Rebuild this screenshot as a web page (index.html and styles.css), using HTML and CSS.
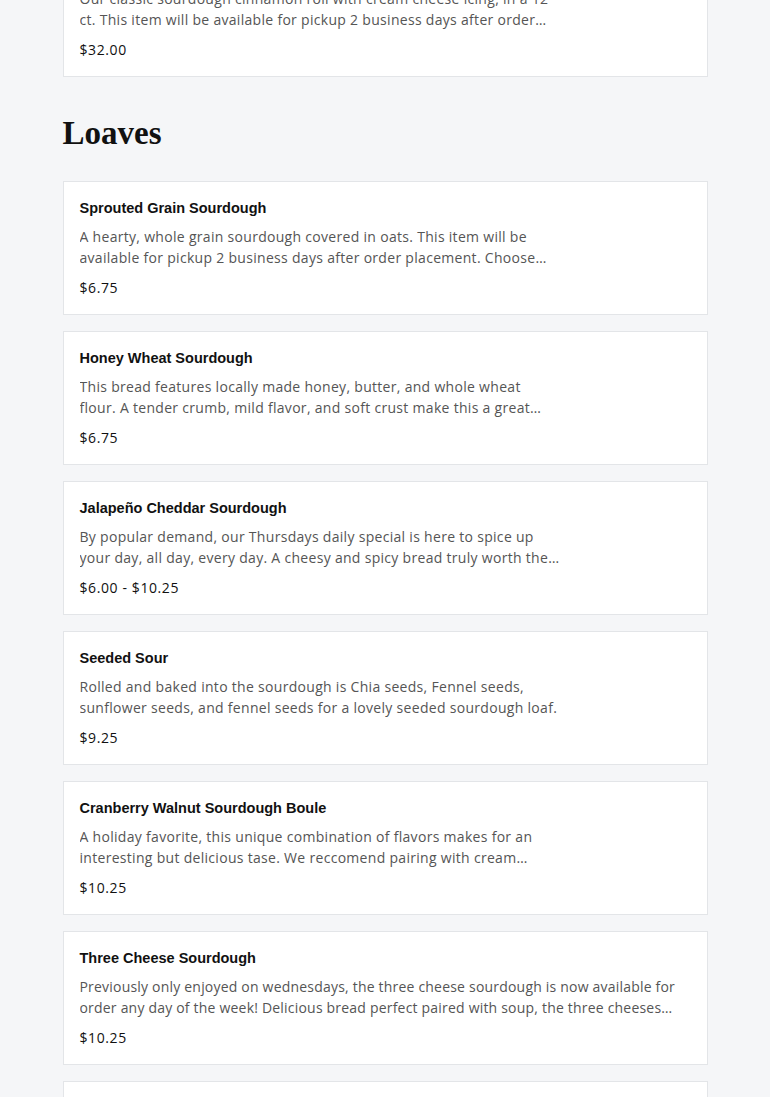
FILE: index.html
```html
<!DOCTYPE html>
<html>
<head>
<meta charset="utf-8">
<link rel="stylesheet" href="styles.css">
</head>
<body>
<main class="page">
  <section class="section">
    <div class="list">
      <div class="card">
        <div class="title">Cinnamon Rolls</div>
        <div class="desc">Our classic sourdough cinnamon roll with cream cheese icing, in a 12 ct. This item will be available for pickup 2 business days after order placement.</div>
        <div class="price">$32.00</div>
      </div>
    </div>
  </section>
  <section class="section">
    <h2 class="heading">Loaves</h2>
    <div class="list">
      <div class="card">
        <div class="title">Sprouted Grain Sourdough</div>
        <div class="desc">A hearty, whole grain sourdough covered in oats. This item will be available for pickup 2 business days after order placement. Choose your pickup date at checkout.</div>
        <div class="price">$6.75</div>
      </div>
      <div class="card">
        <div class="title">Honey Wheat Sourdough</div>
        <div class="desc">This bread features locally made honey, butter, and whole wheat flour. A tender crumb, mild flavor, and soft crust make this a great sandwich bread.</div>
        <div class="price">$6.75</div>
      </div>
      <div class="card">
        <div class="title">Jalapeño Cheddar Sourdough</div>
        <div class="desc">By popular demand, our Thursdays daily special is here to spice up your day, all day, every day. A cheesy and spicy bread truly worth the wait.</div>
        <div class="price">$6.00 - $10.25</div>
      </div>
      <div class="card">
        <div class="title">Seeded Sour</div>
        <div class="desc">Rolled and baked into the sourdough is Chia seeds, Fennel seeds, sunflower seeds, and fennel seeds for a lovely seeded sourdough loaf.</div>
        <div class="price">$9.25</div>
      </div>
      <div class="card">
        <div class="title">Cranberry Walnut Sourdough Boule</div>
        <div class="desc">A holiday favorite, this unique combination of flavors makes for an interesting but delicious tase. We reccomend pairing with cream cheese.</div>
        <div class="price">$10.25</div>
      </div>
      <div class="card">
        <div class="title">Three Cheese Sourdough</div>
        <div class="desc desc-wide">Previously only enjoyed on wednesdays, the three cheese sourdough is now available for order any day of the week! Delicious bread perfect paired with soup, the three cheeses make it special.</div>
        <div class="price">$10.25</div>
      </div>
      <div class="card">
        <div class="title">Rosemary Sourdough</div>
        <div class="desc">A fragrant loaf.</div>
        <div class="price">$6.75</div>
      </div>
    </div>
  </section>
</main>
</body>
</html>
```

FILE: styles.css
```css
html, body {
  margin: 0;
  padding: 0;
  background: #f5f6f8;
}
body {
  font-family: "Open Sans", "Liberation Sans", Arial, sans-serif;
  color: #111;
}
.page {
  width: 645px;
  margin: -57px auto 0;
  display: flex;
  flex-direction: column;
}
.section {
  display: flex;
  flex-direction: column;
}
.heading {
  font-family: "Liberation Serif", "Times New Roman", serif;
  font-weight: bold;
  font-size: 33px;
  line-height: 40px;
  margin: 36px 0 28px;
  color: #111;
}
.list {
  display: flex;
  flex-direction: column;
  gap: 16px;
}
.card {
  background: #fff;
  border: 1px solid #e3e5e8;
  padding: 16px;
  display: flex;
  flex-direction: column;
}
.title {
  font-family: "Liberation Sans", Arial, sans-serif;
  font-size: 14.5px;
  font-weight: bold;
  line-height: 20px;
  color: #111;
}
.desc {
  margin-top: 8px;
  max-width: 480px;
  font-size: 14px;
  line-height: 21px;
  letter-spacing: 0.3px;
  color: #555;
  display: -webkit-box;
  -webkit-line-clamp: 2;
  -webkit-box-orient: vertical;
  overflow: hidden;
}
.desc-wide {
  max-width: none;
  letter-spacing: 0.2px;
}
.price {
  margin-top: 10px;
  font-size: 14px;
  line-height: 20px;
  letter-spacing: 0.6px;
  color: #111;
}
```
